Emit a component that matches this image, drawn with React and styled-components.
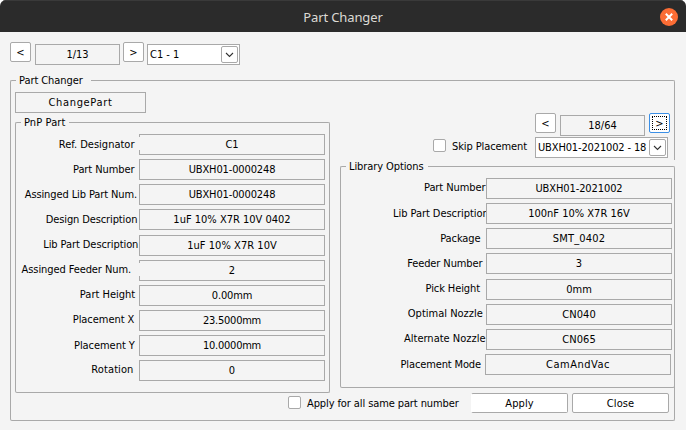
import React from "react";
import styled, { createGlobalStyle, css } from "styled-components";

const line = "#a9a9a9";
const surface = "#f4f4f4";

const GlobalStyle = createGlobalStyle`
  * { box-sizing: border-box; }
  body { margin: 0; background: #fff; }
`;

const Window = styled.div`
  width: 686px;
  height: 430px;
  overflow: hidden;
  display: flex;
  flex-direction: column;
  border-radius: 6px 6px 0 0;
  background: ${surface};
  color: #000;
  font: 11px/13px "DejaVu Sans Condensed", "DejaVu Sans", sans-serif;
  font-stretch: condensed;
  white-space: nowrap;
`;

const TitleBar = styled.header`
  height: 32px;
  flex: none;
  display: grid;
  grid-template-columns: 30px 1fr 30px;
  align-items: center;
  background: #2b2b2b;
  border-top: 1px solid #3a3a3a;
`;

const Title = styled.h1`
  grid-column: 2;
  margin: 0;
  text-align: center;
  color: #dcdad5;
  font: 400 13px/18px "Noto Sans", sans-serif;
  letter-spacing: -0.13px;
`;

const CloseIcon = styled.svg`
  width: 18px;
  height: 18px;
  display: block;
  margin-left: 4px;
`;

const Text = styled.span`
  letter-spacing: ${(p) => p.$ls || 0}px;
`;

const Navigator = styled.div`
  display: flex;
  align-items: flex-start;
`;

const TopNavigator = styled(Navigator)`
  padding: 10px 0 0 10px;
  height: 41px;
`;

const Button = styled.button`
  width: ${(p) => p.$w || 21}px;
  height: 20px;
  padding: 1px 0 0;
  display: flex;
  align-items: center;
  justify-content: center;
  flex: none;
  background: #fff;
  border: 1px solid ${(p) => (p.$focused ? "#3b8fe6" : line)};
  ${(p) => p.$openLeft && css`border-left-color: #fff;`}
  border-radius: 2px;
  color: inherit;
  font: inherit;
`;

const FocusRing = styled.span`
  width: 15px;
  height: 14px;
  margin-top: -1px;
  border: 1px dotted #000;
  display: flex;
  align-items: center;
  justify-content: center;
`;

const Field = styled.div`
  width: ${(p) => p.$w || 186}px;
  height: 21px;
  flex: none;
  border: 1px solid ${line};
  padding-top: 3px;
  text-align: center;
`;

const ChangeField = styled(Field)`
  margin-bottom: 9px;
`;

const Counter = styled(Field)`
  margin: 2px ${(p) => p.$after}px 0 4px;
`;

const ComboSlot = styled.div`
  padding: 2px 0 0 3px;
`;

const Combo = styled.div`
  width: ${(p) => p.$w}px;
  height: 21px;
  flex: none;
  display: flex;
  align-items: center;
  justify-content: space-between;
  padding: 0 1px 0 2px;
  background: #fff;
  border: 1px solid ${line};
`;

const ComboArrow = styled.span`
  width: 17px;
  height: 17px;
  display: flex;
  align-items: center;
  justify-content: center;
  border: 1px solid ${line};
  border-radius: 2px;
`;

const Main = styled.main`
  padding: 7px 0 0 10px;
`;

const Group = styled.section`
  width: ${(p) => p.$w}px;
  height: ${(p) => p.$h}px;
  flex: none;
  border: 1px solid ${line};
  border-top: 0;
  border-radius: 2px;
`;

const GroupHead = styled.div`
  display: grid;
  grid-template-columns: 6px ${(p) => p.$gap}px 1fr;
  height: 13px;
  margin: -6px -1px 0;
  background: ${surface};
`;

const Rule = styled.i`
  align-self: start;
  height: 7px;
  margin-top: 6px;
  border-top: 1px solid ${line};
  ${(p) => p.$side === "left"
    ? css`border-left: 1px solid ${line}; border-top-left-radius: 2px;`
    : css`border-right: 1px solid ${line}; border-top-right-radius: 2px;`}
`;

const Legend = styled.h2`
  margin: 0;
  padding-left: ${(p) => p.$pad}px;
  font: inherit;
`;

const Columns = styled.div`
  display: flex;
  padding-left: 4px;
`;

const LeftColumn = styled.div`
  width: 325px;
  padding-top: 5px;
  flex: none;
`;

const RightColumn = styled.div`
  width: 335px;
  padding-top: 26px;
  flex: none;
`;

const PartNavigator = styled(Navigator)`
  padding-left: 195px;
  height: 24px;
`;

const SkipLine = styled.div`
  display: flex;
  padding-left: 93px;
  height: 29px;
`;

const Check = styled.label`
  display: flex;
  width: ${(p) => p.$w}px;
  padding-top: ${(p) => p.$top}px;
  gap: 6px;
  flex: none;
`;

const CheckText = styled(Text)`
  padding-top: 1px;
`;

const Box = styled.i`
  width: 13px;
  height: 13px;
  flex: none;
  background: #fff;
  border: 1px solid ${line};
  border-radius: 2px;
`;

const Rows = styled.div`
  display: flex;
  flex-direction: column;
  padding-top: 5px;
`;

const Row = styled.div`
  display: flex;
  height: ${(p) => p.$h}px;
  margin-left: ${(p) => p.$shift || 0}px;
`;

const Label = styled.div`
  width: ${(p) => p.$w}px;
  height: 21px;
  flex: none;
  display: flex;
  justify-content: flex-end;
  padding: ${(p) => p.$top}px ${(p) => p.$gap}px 0 0;
  ${(p) => p.$clip && css`
    justify-content: flex-start;
    padding-left: 52px;
    overflow: hidden;
  `}
  ${(p) => p.$overlap && css`
    position: relative;
    &::after {
      content: "";
      position: absolute;
      right: -1px;
      top: 3px;
      width: 1px;
      height: 13px;
      background: ${surface};
    }
  `}
`;

const Actions = styled.footer`
  display: flex;
  padding-left: 277px;
`;

const ButtonPair = styled.div`
  display: flex;
  gap: 4px;
`;

const Chevron = () => (
  <ComboArrow>
    <svg width="9" height="6" viewBox="0 0 9 6" fill="none" stroke="#333" strokeWidth="1.1">
      <path d="M1 1L4.5 4.5L8 1" />
    </svg>
  </ComboArrow>
);

const GroupBox = ({ title, gap, pad = 3, ls, w, h, children }) => (
  <Group $w={w} $h={h}>
    <GroupHead $gap={gap}>
      <Rule $side="left" />
      <Legend $pad={pad}><Text $ls={ls}>{title}</Text></Legend>
      <Rule $side="right" />
    </GroupHead>
    {children}
  </Group>
);

const PropertyRow = ({ label, value, ls, vls, gap, top = 3, h = 25, w, shift, clip, overlap }) => (
  <Row $h={h} $shift={shift}>
    <Label $w={w} $gap={gap} $top={top} $clip={clip} $overlap={overlap}>
      <Text $ls={ls}>{label}</Text>
    </Label>
    <Field><Text $ls={vls}>{value}</Text></Field>
  </Row>
);

const pnpRows = [
  { label: "Ref. Designator", value: "C1", gap: 4.5, top: 4, overlap: true },
  { label: "Part Number", value: "UBXH01-0000248", ls: -0.08, vls: -0.13, gap: 4.5, top: 4 },
  { label: "Assinged Lib Part Num.", value: "UBXH01-0000248", ls: -0.11, vls: -0.13, gap: 2, top: 4 },
  { label: "Design Description", value: "1uF 10% X7R 10V 0402", ls: -0.12, gap: 1.7, top: 4, h: 26 },
  { label: "Lib Part Description", value: "1uF 10% X7R 10V", ls: -0.08, vls: 0.05, gap: 0.7 },
  { label: "Assinged Feeder Num.", value: "2", ls: -0.09, gap: 8, overlap: true },
  { label: "Part Height", value: "0.00mm", gap: 3.8, vls: -0.15 },
  { label: "Placement X", value: "23.5000mm", ls: -0.05, gap: 4.7, vls: -0.25 },
  { label: "Placement Y", value: "10.0000mm", ls: -0.05, gap: 4.2, top: 4, vls: -0.25 },
  { label: "Rotation", value: "0", ls: 0.1, gap: 5.5 },
];

const libraryRows = [
  { label: "Part Number", value: "UBXH01-2021002", ls: -0.08, vls: -0.1, gap: 0.5 },
  { label: "Lib Part Description", value: "100nF 10% X7R 16V", ls: -0.05, gap: 0, top: 4, clip: true },
  { label: "Package", value: "SMT_0402", ls: -0.1, gap: 5.5, top: 4, vls: 0.2 },
  { label: "Feeder Number", value: "3", ls: -0.1, gap: 3.5, top: 4, h: 26 },
  { label: "Pick Height", value: "0mm", ls: -0.1, gap: 6 },
  { label: "Optimal Nozzle", value: "CN040", gap: 3.2, vls: 0.1 },
  { label: "Alternate Nozzle", value: "CN065", gap: 0.5, vls: 0.1 },
  { label: "Placement Mode", value: "CamAndVac", ls: -0.13, gap: 4, top: 4, vls: 0.5, shift: -1 },
];

export default function App() {
  return (
    <>
      <GlobalStyle />
      <Window>
        <TitleBar>
          <Title>Part Changer</Title>
          <CloseIcon viewBox="0 0 18 18">
            <circle cx="9" cy="9" r="9" fill="#fb6d35" />
            <path d="M5.8 5.8L12.2 12.2M12.2 5.8L5.8 12.2" stroke="#fff" strokeWidth="2" />
          </CloseIcon>
        </TitleBar>

        <TopNavigator>
          <Button>&lt;</Button>
          <Counter $w={85} $after={3}>1/13</Counter>
          <Button>&gt;</Button>
          <ComboSlot>
            <Combo $w={93}><Text>C1 - 1</Text><Chevron /></Combo>
          </ComboSlot>
        </TopNavigator>

        <Main>
          <GroupBox title="Part Changer" gap={75} ls={-0.07} w={665} h={347}>
            <Columns>
              <LeftColumn>
                <ChangeField $w={131}><Text $ls={0.65}>ChangePart</Text></ChangeField>
                <GroupBox title="PnP Part" gap={48} ls={0.1} w={315} h={277}>
                  <Rows>
                    {pnpRows.map((row) => <PropertyRow key={row.label} w={123} {...row} />)}
                  </Rows>
                </GroupBox>
              </LeftColumn>
              <RightColumn>
                <PartNavigator>
                  <Button>&lt;</Button>
                  <Counter $w={85} $after={4}>18/64</Counter>
                  <Button $focused><FocusRing>&gt;</FocusRing></Button>
                </PartNavigator>
                <SkipLine>
                  <Check $w={102} $top={2}><Box /><CheckText $ls={-0.1}>Skip Placement</CheckText></Check>
                  <Combo $w={133}><Text $ls={-0.14}>UBXH01-2021002 - 18</Text><Chevron /></Combo>
                </SkipLine>
                <GroupBox title="Library Options" gap={82} ls={-0.09} w={335} h={228}>
                  <Rows>
                    {libraryRows.map((row) => <PropertyRow key={row.label} w={145} {...row} />)}
                  </Rows>
                </GroupBox>
              </RightColumn>
            </Columns>
            <Actions>
              <Check $w={183} $top={3}><Box /><CheckText $ls={-0.1}>Apply for all same part number</CheckText></Check>
              <ButtonPair>
                <Button $w={97} $openLeft><Text $ls={0.1}>Apply</Text></Button>
                <Button $w={97}><Text $ls={0.1}>Close</Text></Button>
              </ButtonPair>
            </Actions>
          </GroupBox>
        </Main>
      </Window>
    </>
  );
}
